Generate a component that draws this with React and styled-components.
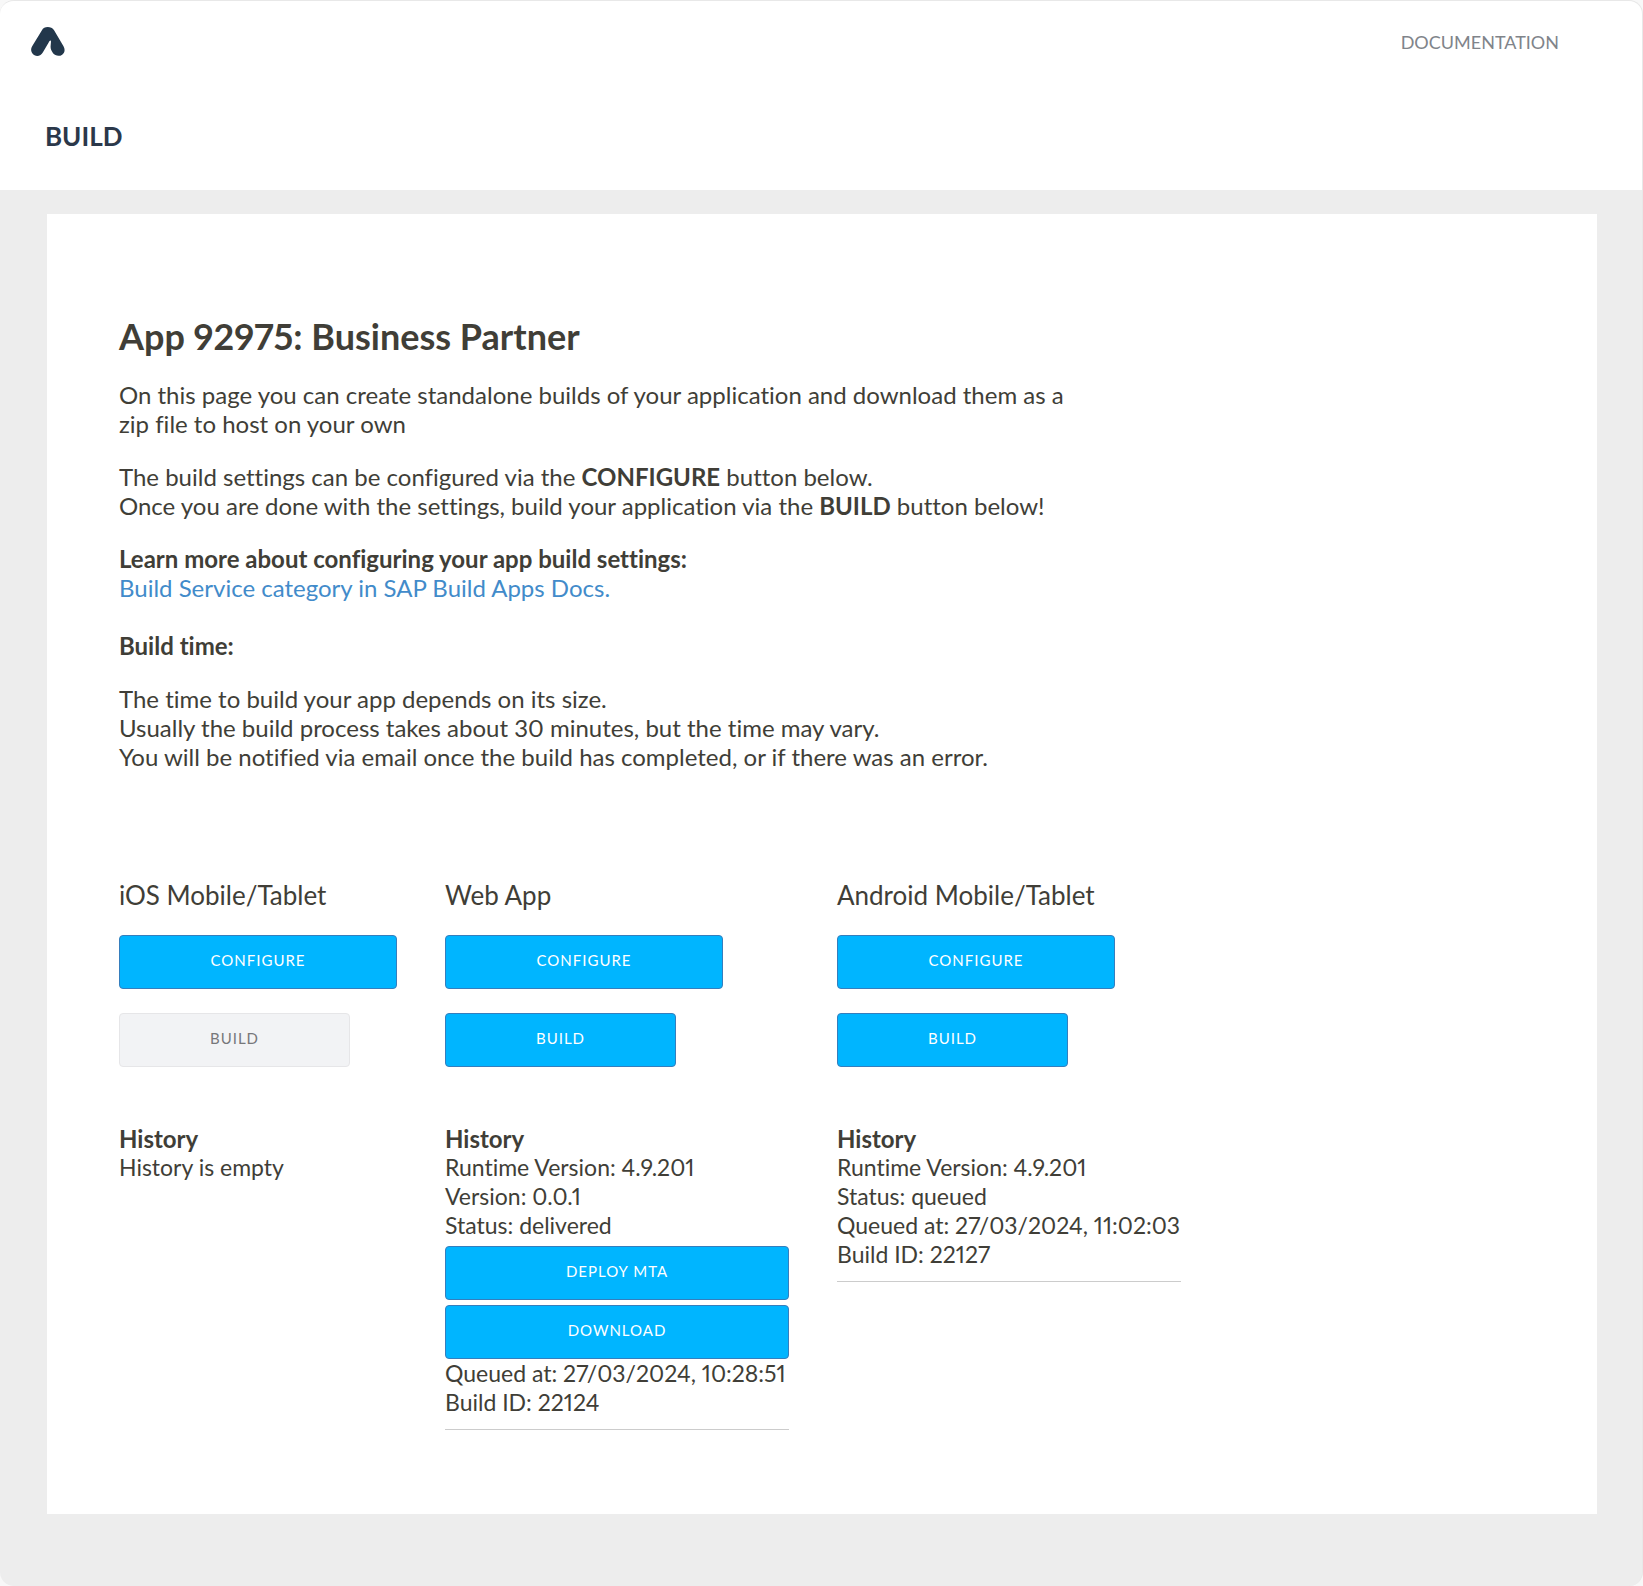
import React from "react";
import styled, { createGlobalStyle } from "styled-components";

const GlobalStyle = createGlobalStyle`
  *, *::before, *::after { box-sizing: border-box; }
  body {
    margin: 0;
    background: #f8f8f8;
    color: #403e37;
    font-family: Lato, "Open Sans", sans-serif;
    font-size: 24px;
    line-height: 29px;
    font-variant-ligatures: none;
    font-variant-numeric: proportional-nums;
  }
`;

const Page = styled.div`
  display: flex;
  flex-direction: column;
  min-height: 100vh;
  overflow: hidden;
  background: #ededed;
  border: solid #e8e8e8;
  border-width: 1px 1px 0 0;
  border-radius: 14px;
`;

const Header = styled.header`
  background: #fff;
`;

const TopBar = styled.div`
  display: flex;
  align-items: center;
  justify-content: space-between;
  height: 81px;
  padding: 0 83px 0 31px;
`;

const Logo = styled.svg`
  display: block;
  width: 34px;
  height: 29px;
`;

const NavLink = styled.a`
  padding-top: 2px;
  color: #80848a;
  font-size: 18px;
  text-decoration: none;
`;

const PageTitle = styled.h1`
  margin: 0;
  padding: 40px 45px 39px;
  color: #2b384a;
  font-size: 26px;
  font-weight: 700;
  line-height: 29px;
`;

const Panel = styled.main`
  margin: 24px 45px 72px 47px;
  padding: 102px 72px 84px;
  background: #fff;
`;

const AppTitle = styled.h2`
  margin: 0 0 24px;
  font-size: 36px;
  font-weight: 700;
  line-height: 40px;
`;

const Intro = styled.section`
  max-width: 966px;
  margin-bottom: 108px;
`;

const Paragraph = styled.p`
  margin: 0 0 24px;
`;

const DocsLink = styled.a`
  color: #428bca;
  text-decoration: none;
`;

const Platforms = styled.div`
  display: grid;
  grid-template-columns: 278px 344px 344px;
  gap: 48px;
`;

const PlatformTitle = styled.h3`
  margin: 0 0 24px;
  font-size: 26px;
  font-weight: 400;
  line-height: 32px;
`;

const Actions = styled.div`
  display: flex;
  flex-direction: column;
  align-items: flex-start;
  gap: 24px;
  margin-bottom: 57px;
`;

const Button = styled.button`
  width: ${(p) => p.$width || "100%"};
  height: 54px;
  padding: 0 0 4px;
  border: 1px solid #357ebd;
  border-radius: 4px;
  background: #00b5ff;
  color: #fff;
  font-family: inherit;
  font-size: 15px;
  letter-spacing: 1px;
  text-transform: uppercase;
  cursor: pointer;

  &:disabled {
    border-color: #e6e6e8;
    background: #f2f3f5;
    color: #77777a;
    cursor: default;
  }
`;

const HistoryBlock = styled.div`
  font-size: 23px;
  white-space: nowrap;
`;

const HistoryTitle = styled.h4`
  margin: 0;
  font-size: 24px;
  font-weight: 700;
`;

const Entry = styled.div`
  padding-bottom: 12px;
  border-bottom: 1px solid #ccc;
`;

const EntryActions = styled.div`
  display: grid;
  gap: 5px;
  padding-top: 6px;
`;

const platforms = [
  { name: "iOS Mobile/Tablet", canBuild: false },
  {
    name: "Web App",
    canBuild: true,
    entry: {
      before: ["Runtime Version: 4.9.201", "Version: 0.0.1", "Status: delivered"],
      actions: ["Deploy MTA", "Download"],
      after: ["Queued at: 27/03/2024, 10:28:51", "Build ID: 22124"],
    },
  },
  {
    name: "Android Mobile/Tablet",
    canBuild: true,
    entry: {
      before: ["Runtime Version: 4.9.201", "Status: queued"],
      actions: [],
      after: ["Queued at: 27/03/2024, 11:02:03", "Build ID: 22127"],
    },
  },
];

function HistoryEntry({ entry }) {
  if (!entry) return <div>History is empty</div>;
  return (
    <Entry>
      {entry.before.map((line) => <div key={line}>{line}</div>)}
      {entry.actions.length > 0 && (
        <EntryActions>
          {entry.actions.map((label) => <Button key={label} type="button">{label}</Button>)}
        </EntryActions>
      )}
      {entry.after.map((line) => <div key={line}>{line}</div>)}
    </Entry>
  );
}

function Platform({ name, canBuild, entry }) {
  return (
    <section>
      <PlatformTitle>{name}</PlatformTitle>
      <Actions>
        <Button type="button" $width="278px">Configure</Button>
        <Button type="button" $width="231px" disabled={!canBuild}>Build</Button>
      </Actions>
      <HistoryBlock>
        <HistoryTitle>History</HistoryTitle>
        <HistoryEntry entry={entry} />
      </HistoryBlock>
    </section>
  );
}

export default function App() {
  return (
    <Page>
      <GlobalStyle />
      <Header>
        <TopBar>
          <Logo viewBox="0 0 100 86" role="img" aria-label="Home">
            <path
              fill="#22374b"
              d="M32 10C38-3 60-3 68 10L96 57C102 67 99 78 92 82C84 88 71 86 65 78C58 68 57 62 58 54C58 48 60 44 58 40C56 39 54 42 52 46L35 75C30 84 20 89 10 84C0 78-3 67 3 57Z"
            />
          </Logo>
          <NavLink href="#documentation">DOCUMENTATION</NavLink>
        </TopBar>
        <PageTitle>BUILD</PageTitle>
      </Header>
      <Panel>
        <AppTitle>App 92975: Business Partner</AppTitle>
        <Intro>
          <Paragraph>
            On this page you can create standalone builds of your application and download them as a
            zip file to host on your own
          </Paragraph>
          <Paragraph>
            The build settings can be configured via the <strong>CONFIGURE</strong> button below.
            <br />
            Once you are done with the settings, build your application via the{" "}
            <strong>BUILD</strong> button below!
          </Paragraph>
          <Paragraph>
            <strong>Learn more about configuring your app build settings:</strong>
            <br />
            <DocsLink href="#docs">Build Service category in SAP Build Apps Docs.</DocsLink>
            <br />
            <br />
            <strong>Build time:</strong>
          </Paragraph>
          <Paragraph>
            The time to build your app depends on its size.
            <br />
            Usually the build process takes about 30 minutes, but the time may vary.
            <br />
            You will be notified via email once the build has completed, or if there was an error.
          </Paragraph>
        </Intro>
        <Platforms>
          {platforms.map((platform) => <Platform key={platform.name} {...platform} />)}
        </Platforms>
      </Panel>
    </Page>
  );
}
